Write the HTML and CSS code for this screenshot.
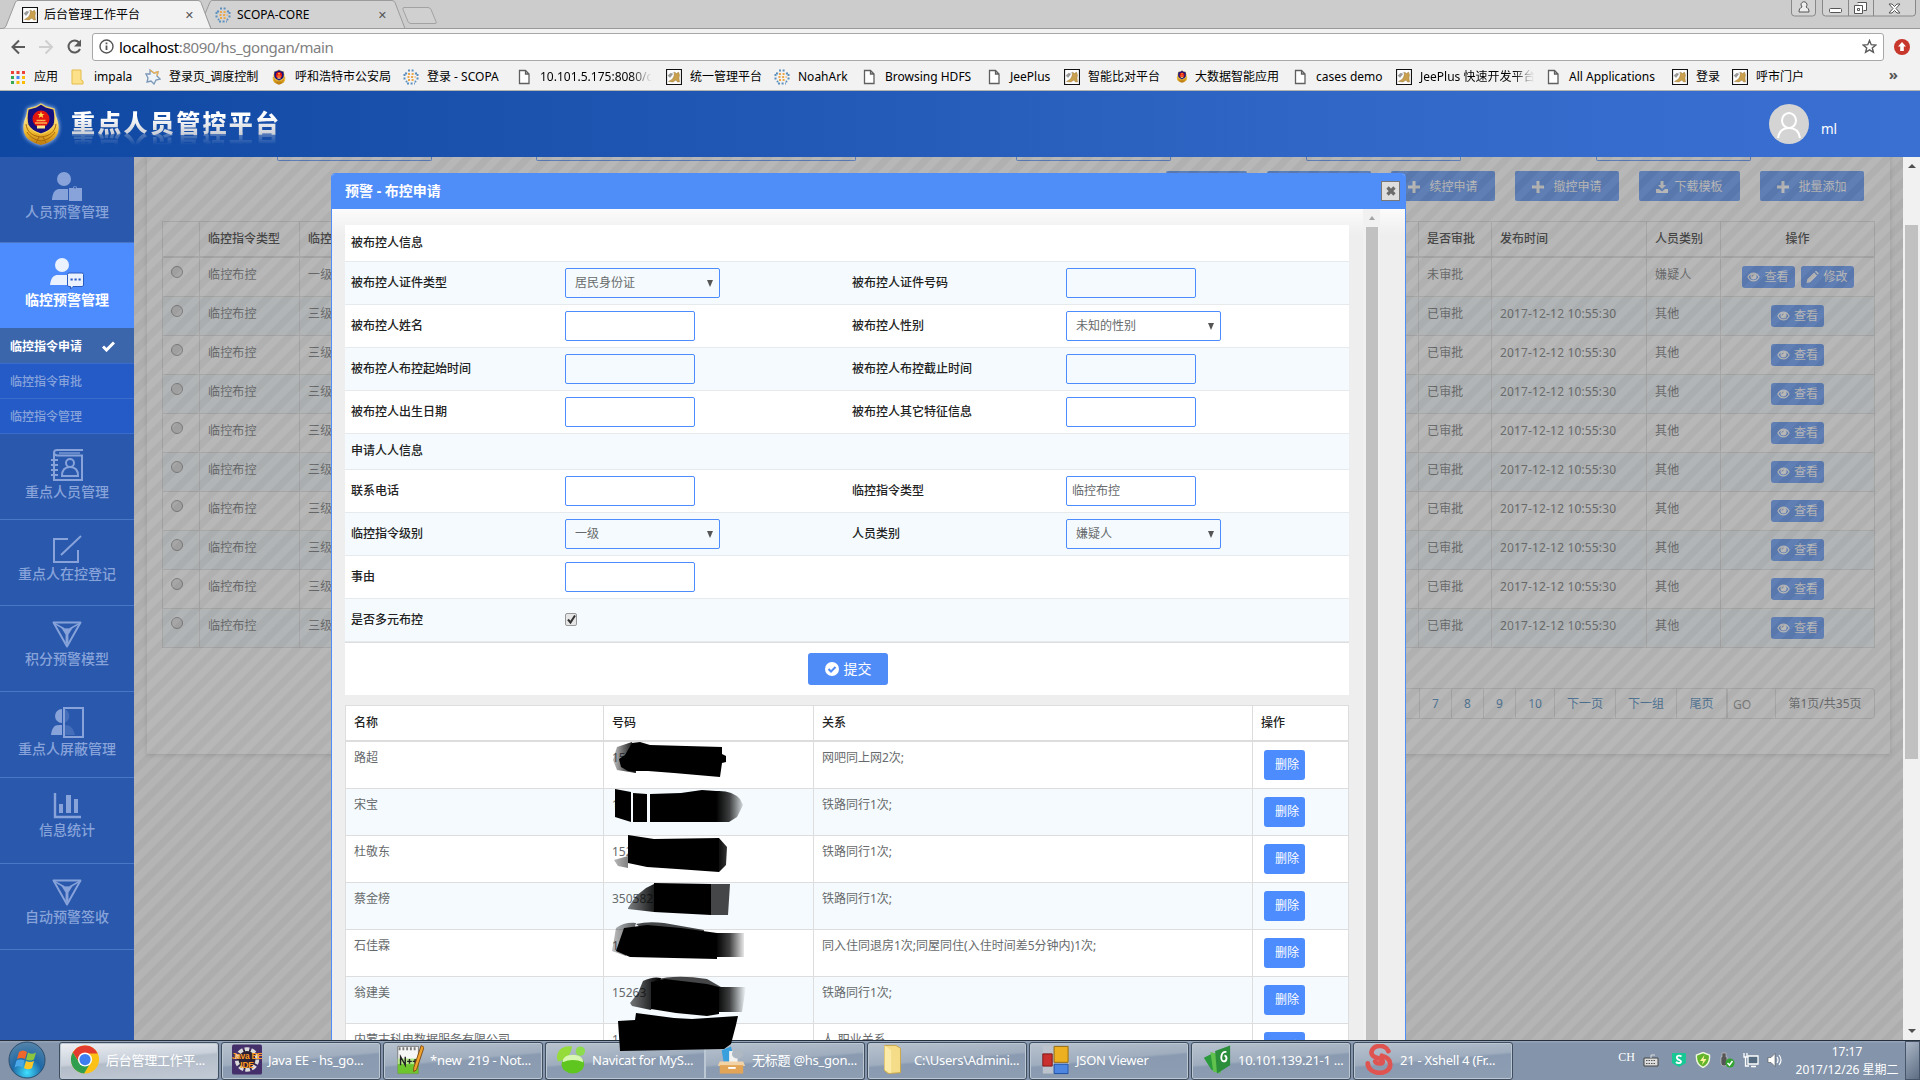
FILE: index.html
```html
<!DOCTYPE html>
<html lang="zh-CN">
<head>
<meta charset="utf-8">
<title>后台管理工作平台</title>
<link rel="stylesheet" href="styles.css">
</head>
<body>
<svg class="defs" width="0" height="0" aria-hidden="true">
  <defs>
    <linearGradient id="gold" x1="0" y1="0" x2="0" y2="1"><stop offset="0" stop-color="#fff3b0"/><stop offset=".6" stop-color="#efb82c"/><stop offset="1" stop-color="#b9780f"/></linearGradient>
    <radialGradient id="orb" cx=".5" cy=".85" r=".9"><stop offset="0" stop-color="#3fe0ff"/><stop offset=".45" stop-color="#1e6aa8"/><stop offset="1" stop-color="#5d87a8"/></radialGradient>
    <linearGradient id="fadeR"><stop offset="0" stop-color="#000"/><stop offset=".45" stop-color="#000" stop-opacity=".75"/><stop offset="1" stop-color="#000" stop-opacity="0"/></linearGradient>
    <linearGradient id="fadeL"><stop offset="0" stop-color="#000" stop-opacity=".25"/><stop offset="1" stop-color="#000"/></linearGradient>
  </defs>
  <symbol id="cat" viewBox="0 0 16 16"><path d="M.5.5h15v15H.5z" fill="#fff" stroke="#111" stroke-width="1.2"/><path d="M2.500 12.500l4-2.500 1.500-3L8.500 3l2 1.500L12.500 3l1 3-.5 3 .5 4h-2l-1.500-2-3 2z" fill="#c9a04e" stroke="#8d6a2f" stroke-width=".4"/><path d="M2 6.500L5 4l1.500 1.500-2.500 3zM6 4.500l2-1" fill="#999" stroke="#888" stroke-width=".5"/></symbol>
  <symbol id="scopa" viewBox="0 0 16 16"><g fill="none" stroke-width="2" stroke-dasharray="2 1.600"><path d="M5 1.500h7M4 14.500h8M1.500 5v7M14.500 5v7M3.500 3.500l-1 2M12.500 3.500l1 2M3 12l1 1M13 12l-1 1" stroke="#5b8fbe"/><path d="M5 5h7M4.500 8h8M5 11h7" stroke="#eda74b"/></g></symbol>
  <symbol id="page" viewBox="0 0 16 16"><path d="M3.500 1.500h6l3.500 3.500v9.500H3.500zM9.500 1.500V5H13" fill="#fff" stroke="#5f5f5f" stroke-width="1.300"/></symbol>
  <symbol id="badge" viewBox="0 0 40 44"><path d="M6 12C1 22 1 31 7 37c4 3 8 5 13 6 5-1 9-3 13-6 6-6 6-15 1-25L20 28z" fill="url(#gold)"/><path d="M20 2l5 3 8 2q2 10 0 16-3 6-13 9Q10 29 7 23 5 17 7 7l8-2z" fill="#15127d" stroke="#f6d35c" stroke-width="1.300"/><circle cx="20" cy="17" r="8.500" fill="#e2160f"/><path d="M20 9.500l1 2.500h2.500l-2 1.500.8 2.500-2.300-1.500-2.300 1.500.8-2.500-2-1.500H19z" fill="#ffd84e"/><path d="M14 21h12M15.500 18.500h9" stroke="#ffb04e" stroke-width="1.500"/><path d="M16 25h8" stroke="#ffe98a" stroke-width="3"/><path d="M5 22c1 8 6 12 15 13 9-1 14-5 15-13M6 30c3 5 8 8 14 9 6-1 11-4 14-9M15 41l3-6M25 41l-3-6" fill="none" stroke="#a9680c" stroke-width="1"/></symbol>
  <symbol id="plus" viewBox="0 0 12 12"><path d="M4.500 0h3v4.500H12v3H7.500V12h-3V7.500H0v-3h4.500z" fill="currentColor"/></symbol>
  <symbol id="eye" viewBox="0 0 14 12"><path d="M1 6c3-5.600 9-5.600 12 0-3 5.600-9 5.600-12 0z" fill="none" stroke="currentColor" stroke-width="1.300"/><circle cx="7" cy="5.500" r="3.300" fill="currentColor"/><path d="M5.400 5.600a1.700 1.700 0 0 1 1.700-1.700" fill="none" stroke="#5f7fbd" stroke-width=".9"/></symbol>
  <symbol id="pencil" viewBox="0 0 12 12"><path d="M0 12l.8-3.700L7.600 1.500l2.900 2.900-6.800 6.800zM8.400.700l.7-.7h.8L12 2.100v.8l-.7.7z" fill="currentColor"/></symbol>
  <symbol id="funnel" viewBox="0 0 32 28"><path d="M2 1.500h28L16 26.500z" fill="none" stroke="currentColor" stroke-width="2" stroke-linejoin="round"/><path d="M2 2l11 6M30 2l-11 6M16 8v18" fill="none" stroke="currentColor" stroke-width="1.600"/><path d="M10 7q6 1.500 12 0l-4.500 7v9h-3v-9z" fill="currentColor"/></symbol>
</svg>

<header class="chrome">
  <div class="tabstrip">
    <div class="tab tab-on">
      <svg class="tab-shape" viewBox="0 0 218 29"><path d="M0 28.500h2.500Q5 28.500 6 26L15.500 2Q16.500.5 18 .5h180q2 0 3 2L211 29H0z" fill="#f2f2f2" stroke="#9b9b9b"/></svg>
      <svg class="i16"><use href="#cat"/></svg><span>后台管理工作平台</span><b class="tab-x">✕</b>
    </div>
    <div class="tab tab-off">
      <svg class="tab-shape" viewBox="0 0 202 29"><path d="M1 14L6 2Q7 .5 8 .5h180q2 0 3 2l10 26H7z" fill="#d2d2d2" stroke="#9b9b9b"/></svg>
      <svg class="i16"><use href="#scopa"/></svg><span>SCOPA-CORE</span><b class="tab-x">✕</b>
    </div>
    <svg class="newtab" viewBox="0 0 36 18"><path d="M2 .5h24q2 0 3 2l5 12q1 2-1 2H9q-2 0-3-2L1 2.500Q.5.5 2 .5z" fill="#d0d0d0" stroke="#a2a2a2"/></svg>
    <div class="winbtns">
      <svg width="25" height="17"><path d="M.5 0v13q0 3 3 3h18q3 0 3-3V0" fill="#d3d3d3" stroke="#888"/><path d="M10 5a3 3 0 1 1 5 2c2 1 3 2 3 5H8c0-3 1-4 3-5z" fill="#eee" stroke="#555"/></svg>
      <svg width="94" height="17"><path d="M.5 0v13q0 3 3 3h87q3 0 3-3V0M26.500 0v16M51.500 0v16" fill="#d3d3d3" stroke="#888"/><rect x="7.500" y="8.500" width="12" height="4" rx="1" fill="#fff" stroke="#555"/><path d="M35.500 2.500h9v8h-3M32.500 5.500h8v8h-8z M35.500 8.500h2v2h-2z" fill="#fff" stroke="#555"/><path d="M67 4h3l2.500 2.500L75 4h3l-4 4.500 4 4.500h-3l-2.500-2.500L70 13h-3l4-4.500z" fill="#fff" stroke="#555"/></svg>
    </div>
  </div>
  <div class="toolbar">
    <svg class="navs" viewBox="0 0 76 18"><g fill="none" stroke-width="2"><path d="M14 9H2M8 2.500L1.500 9 8 15.500" stroke="#5a5a5a"/><path d="M28 9h12M34.500 2.500L41 9l-6.500 6.500" stroke="#cfcfcf"/><path d="M68 4.500A6 6 0 1 0 69 11" stroke="#5a5a5a"/></g><path d="M70 1.500v7h-7z" fill="#5a5a5a"/></svg>
    <div class="omnibox">
      <svg width="15" height="15" viewBox="0 0 15 15"><circle cx="7.500" cy="7.500" r="6.500" fill="none" stroke="#555" stroke-width="1.400"/><path d="M7.500 6.500V11M7.500 3.500v1.700" stroke="#555" stroke-width="1.800"/></svg>
      <span class="url"><i>localhost</i>:8090/hs_gongan/main</span>
      <svg class="star" width="15" height="15" viewBox="0 0 15 15"><path d="M7.500 1.500l1.700 4.200 4.600.3-3.500 2.900 1.100 4.400-3.900-2.400-3.900 2.400 1.100-4.400L1.200 6l4.600-.3z" fill="none" stroke="#5a5a5a" stroke-width="1.400"/></svg>
    </div>
    <svg class="upd" width="16" height="16" viewBox="0 0 16 16"><circle cx="8" cy="8" r="8" fill="#c8372b"/><path d="M8 3l4 4.500H9.800V12H6.200V7.500H4z" fill="#fff"/></svg>
  </div>
  <nav class="bookmarks">
    <a class="bm w1"><svg class="i16" viewBox="0 0 16 16"><path d="M1 2h3v3H1z" fill="#ea4335"/><path d="M6.500 2h3v3h-3z" fill="#ea4335"/><path d="M12 2h3v3h-3z" fill="#ea4335"/><path d="M1 7h3v3H1z" fill="#34a853"/><path d="M6.500 7h3v3h-3z" fill="#4285f4"/><path d="M12 7h3v3h-3zM6.500 12h3v3h-3zM12 12h3v3h-3z" fill="#fbbc05"/><path d="M1 12h3v3H1z" fill="#34a853"/></svg><span>应用</span></a>
    <a class="bm w2"><svg class="i16" viewBox="0 0 16 16"><path d="M2 1h9v10l2 1v3H2z" fill="#fce08a" stroke="#e5bd4b"/></svg><span>impala</span></a>
    <a class="bm w3"><svg class="i16" viewBox="0 0 16 16"><path d="M5 1l4 3 4-1-1 4 3 3-4 1-2 4-3-3-4 1 1-4-2-4 4 0z" fill="#eef3f8" stroke="#7b97b8" stroke-width="1.300"/><path d="M5 1l4 3 4-1-1 4" fill="none" stroke="#e8b259" stroke-width="1.300"/></svg><span>登录页_调度控制</span></a>
    <a class="bm w4"><svg class="i16"><use href="#badge"/></svg><span>呼和浩特市公安局</span></a>
    <a class="bm w5"><svg class="i16"><use href="#scopa"/></svg><span>登录 - SCOPA</span></a>
    <a class="bm w6 fade"><svg class="i16"><use href="#page"/></svg><span>10.101.5.175:8080/c</span></a>
    <a class="bm w7"><svg class="i16"><use href="#cat"/></svg><span>统一管理平台</span></a>
    <a class="bm w8"><svg class="i16"><use href="#scopa"/></svg><span>NoahArk</span></a>
    <a class="bm w9"><svg class="i16"><use href="#page"/></svg><span>Browsing HDFS</span></a>
    <a class="bm w10"><svg class="i16"><use href="#page"/></svg><span>JeePlus</span></a>
    <a class="bm w11"><svg class="i16"><use href="#cat"/></svg><span>智能比对平台</span></a>
    <a class="bm w12"><svg class="i16 sm"><use href="#badge"/></svg><span>大数据智能应用</span></a>
    <a class="bm w13"><svg class="i16"><use href="#page"/></svg><span>cases demo</span></a>
    <a class="bm w14 fade"><svg class="i16"><use href="#cat"/></svg><span>JeePlus 快速开发平台</span></a>
    <a class="bm w15"><svg class="i16"><use href="#page"/></svg><span>All Applications</span></a>
    <a class="bm w16"><svg class="i16"><use href="#cat"/></svg><span>登录</span></a>
    <a class="bm w17"><svg class="i16"><use href="#cat"/></svg><span>呼市门户</span></a>
    <b class="more">»</b>
  </nav>
</header>

<div class="apphead">
  <svg class="logo" width="40" height="44"><use href="#badge"/></svg>
  <h1>重点人员管控平台</h1>
  <svg class="avatar" width="40" height="40" viewBox="0 0 40 40"><circle cx="20" cy="20" r="20" fill="#d4d4d4"/><ellipse cx="20" cy="16.500" rx="7" ry="7.500" fill="none" stroke="#fff" stroke-width="2"/><path d="M9 34c1-7 5-10 11-10s10 3 11 10" fill="none" stroke="#fff" stroke-width="2"/></svg>
  <span class="user">ml</span>
</div>

<div class="app">
  <aside class="side">
    <a class="item"><svg width="32" height="29" viewBox="0 0 32 29"><circle cx="13" cy="7" r="7" fill="currentColor"/><path d="M1 27c1-8 4-10 8-10h8v11H1z" fill="currentColor"/><path d="M18 16h4a2 2 0 1 1 4 0h5v13H18z" fill="currentColor"/><circle cx="24" cy="15.500" r="1" fill="#2958ac"/></svg><span>人员预警管理</span></a>
    <a class="item on"><svg width="34" height="31" viewBox="0 0 34 31"><circle cx="12" cy="7" r="7" fill="currentColor"/><path d="M0 27c1-8 4-10 8-10h10v10z" fill="currentColor"/><path d="M19 15h13q1.500 0 1.500 1.500V27q0 1.500-1.500 1.500H23L20.500 31v-2.500H19q-1.500 0-1.500-1.500V16.500Q17.500 15 19 15z" fill="#eaf1ff" stroke="#2a5cc0"/><path d="M20.500 21.500h2.200m1.800 0h2.200m1.800 0h2.200" stroke="#2a5cc0" stroke-width="2"/></svg><span>临控预警管理</span></a>
    <a class="sub cur"><span>临控指令申请</span><svg width="13" height="11" viewBox="0 0 13 11"><path d="M1 5.500l3.500 3.500L12 1.500" fill="none" stroke="#fff" stroke-width="3"/></svg></a>
    <a class="sub"><span>临控指令审批</span></a>
    <a class="sub"><span>临控指令管理</span></a>
    <a class="item"><svg width="34" height="32" viewBox="0 0 34 32"><g fill="none" stroke="currentColor" stroke-width="2"><path d="M33 1H7Q4 1 4 3.500T7 6.500h25V31H4V4"/><path d="M9 4h21" stroke-width="1.300"/><circle cx="20" cy="14" r="4"/><path d="M12 27c0-6 3-9 8-9s8 3 8 9z"/><path d="M1 11h7M1 16h7M1 21h7M1 26h7"/></g></svg><span>重点人员管理</span></a>
    <a class="item"><svg width="30" height="28" viewBox="0 0 30 28"><path d="M16 4H2v23h24V15M9 20L29 1" fill="none" stroke="currentColor" stroke-width="2"/></svg><span>重点人在控登记</span></a>
    <a class="item"><svg width="32" height="27"><use href="#funnel"/></svg><span>积分预警模型</span></a>
    <a class="item"><svg width="34" height="31" viewBox="0 0 34 31"><path d="M12 2a7 7 0 0 0 0 14zM1 28c1-7 3-10 8-10h3v10z" fill="currentColor"/><path d="M14 2c7 2 7 12 0 14zM14 18c7 0 9 3 11 10H14z" fill="currentColor" opacity=".3"/><path d="M14 1h19v29H14z" fill="none" stroke="currentColor" stroke-width="2"/></svg><span>重点人屏蔽管理</span></a>
    <a class="item"><svg width="28" height="26" viewBox="0 0 28 26"><path d="M2 0v24h26" fill="none" stroke="currentColor" stroke-width="2.400"/><path d="M6 11h4v9H6zM13 2h5v18h-5zM21 6h4v14h-4z" fill="currentColor"/></svg><span>信息统计</span></a>
    <a class="item"><svg width="32" height="27"><use href="#funnel"/></svg><span>自动预警签收</span></a>
  </aside>

  <main class="content">
    <section class="panel">
      <div class="filters"><i class="f1"></i><i class="f2"></i><i class="f3"></i><i class="f4"></i><i class="f5"></i></div>
      <div class="actions">
        <a class="b81"></a><a class="b104"></a>
        <a class="b104"><svg class="i12"><use href="#plus"/></svg>续控申请</a>
        <a class="b104"><svg class="i12"><use href="#plus"/></svg>撤控申请</a>
        <a class="b101"><svg class="i12 dl" viewBox="0 0 12 12"><path d="M4.500 0h3v4H10L6 8 2 4h2.500zM0 8h3l3 2.500L9 8h3v4H0z" fill="currentColor"/></svg>下载模板</a>
        <a class="b104"><svg class="i12"><use href="#plus"/></svg>批量添加</a>
      </div>
      <table class="grid">
        <colgroup><col class="c1"><col class="c2"><col class="c3"><col class="c4"><col class="c5"><col class="c6"><col class="c7"></colgroup>
        <thead><tr><th></th><th>临控指令类型</th><th>临控指令级别</th><th>是否审批</th><th>发布时间</th><th>人员类别</th><th class="ctr">操作</th></tr></thead>
        <tbody>
        <tr><td><i class="radio"></i></td><td>临控布控</td><td>一级</td><td>未审批</td><td></td><td>嫌疑人</td><td><div class="ops"><a class="view"><svg><use href="#eye"/></svg>查看</a><a class="view"><svg><use href="#pencil"/></svg>修改</a></div></td></tr>
        <tr><td><i class="radio"></i></td><td>临控布控</td><td>三级</td><td>已审批</td><td>2017-12-12 10:55:30</td><td>其他</td><td><div class="ops"><a class="view"><svg><use href="#eye"/></svg>查看</a></div></td></tr>
        <tr><td><i class="radio"></i></td><td>临控布控</td><td>三级</td><td>已审批</td><td>2017-12-12 10:55:30</td><td>其他</td><td><div class="ops"><a class="view"><svg><use href="#eye"/></svg>查看</a></div></td></tr>
        <tr><td><i class="radio"></i></td><td>临控布控</td><td>三级</td><td>已审批</td><td>2017-12-12 10:55:30</td><td>其他</td><td><div class="ops"><a class="view"><svg><use href="#eye"/></svg>查看</a></div></td></tr>
        <tr><td><i class="radio"></i></td><td>临控布控</td><td>三级</td><td>已审批</td><td>2017-12-12 10:55:30</td><td>其他</td><td><div class="ops"><a class="view"><svg><use href="#eye"/></svg>查看</a></div></td></tr>
        <tr><td><i class="radio"></i></td><td>临控布控</td><td>三级</td><td>已审批</td><td>2017-12-12 10:55:30</td><td>其他</td><td><div class="ops"><a class="view"><svg><use href="#eye"/></svg>查看</a></div></td></tr>
        <tr><td><i class="radio"></i></td><td>临控布控</td><td>三级</td><td>已审批</td><td>2017-12-12 10:55:30</td><td>其他</td><td><div class="ops"><a class="view"><svg><use href="#eye"/></svg>查看</a></div></td></tr>
        <tr><td><i class="radio"></i></td><td>临控布控</td><td>三级</td><td>已审批</td><td>2017-12-12 10:55:30</td><td>其他</td><td><div class="ops"><a class="view"><svg><use href="#eye"/></svg>查看</a></div></td></tr>
        <tr><td><i class="radio"></i></td><td>临控布控</td><td>三级</td><td>已审批</td><td>2017-12-12 10:55:30</td><td>其他</td><td><div class="ops"><a class="view"><svg><use href="#eye"/></svg>查看</a></div></td></tr>
        <tr><td><i class="radio"></i></td><td>临控布控</td><td>三级</td><td>已审批</td><td>2017-12-12 10:55:30</td><td>其他</td><td><div class="ops"><a class="view"><svg><use href="#eye"/></svg>查看</a></div></td></tr>
        </tbody>
      </table>
      <div class="pager"><a class="p1"></a><a class="p1">7</a><a class="p1">8</a><a class="p1">9</a><a class="p2">10</a><a class="p3">下一页</a><a class="p3">下一组</a><a class="p4">尾页</a><span class="go">GO</span><span class="sum">第1页/共35页</span></div>
    </section>
    <div class="shade"></div>
  </main>
  <div class="vbar"><i class="up"></i><i class="thumb"></i><i class="down"></i></div>

  <div class="modal">
    <div class="mhead"><h2>预警 - 布控申请</h2><a class="close"><svg width="10" height="10" viewBox="0 0 10 10"><path d="M1.500 1.500l7 7M8.500 1.500l-7 7" stroke="#6b6b6b" stroke-width="3.200"/></svg></a></div>
    <div class="mbody">
      <div class="mmain">
        <div class="form">
          <div class="row cap"><b>被布控人信息</b></div>
          <div class="row alt"><b>被布控人证件类型</b><div><span class="sel">居民身份证</span></div><b>被布控人证件号码</b><div><span class="inp"></span></div></div>
          <div class="row"><b>被布控人姓名</b><div><span class="inp"></span></div><b>被布控人性别</b><div><span class="sel">未知的性别</span></div></div>
          <div class="row alt"><b>被布控人布控起始时间</b><div><span class="inp"></span></div><b>被布控人布控截止时间</b><div><span class="inp"></span></div></div>
          <div class="row"><b>被布控人出生日期</b><div><span class="inp"></span></div><b>被布控人其它特征信息</b><div><span class="inp"></span></div></div>
          <div class="row cap alt"><b>申请人人信息</b></div>
          <div class="row"><b>联系电话</b><div><span class="inp"></span></div><b>临控指令类型</b><div><span class="inp">临控布控</span></div></div>
          <div class="row alt"><b>临控指令级别</b><div><span class="sel">一级</span></div><b>人员类别</b><div><span class="sel">嫌疑人</span></div></div>
          <div class="row"><b>事由</b><div><span class="inp"></span></div></div>
          <div class="row alt"><b>是否多元布控</b><div><span class="chk"><svg width="11" height="11" viewBox="0 0 11 11"><path d="M2 5.500l2.500 3L9 1.500" fill="none" stroke="#333" stroke-width="2"/></svg></span></div></div>
          <div class="submit"><a><svg width="14" height="14" viewBox="0 0 14 14"><circle cx="7" cy="7" r="7" fill="#fff"/><path d="M3.500 7l2.500 2.500 4.500-4.500" fill="none" stroke="#4f8cf7" stroke-width="2"/></svg>提交</a></div>
        </div>
        <table class="rel">
          <colgroup><col class="r1"><col class="r2"><col class="r3"><col class="r4"></colgroup>
          <thead><tr><th>名称</th><th>号码</th><th>关系</th><th>操作</th></tr></thead>
          <tbody>
          <tr><td>路超</td><td>15</td><td>网吧同上网2次;</td><td><a class="del">删除</a></td></tr>
          <tr><td>宋宝</td><td>1</td><td>铁路同行1次;</td><td><a class="del">删除</a></td></tr>
          <tr><td>杜敬东</td><td>152</td><td>铁路同行1次;</td><td><a class="del">删除</a></td></tr>
          <tr><td>蔡金榜</td><td>350582</td><td>铁路同行1次;</td><td><a class="del">删除</a></td></tr>
          <tr><td>石佳霖</td><td>1</td><td>同入住同退房1次;同屋同住(入住时间差5分钟内)1次;</td><td><a class="del">删除</a></td></tr>
          <tr><td>翁建美</td><td>15263</td><td>铁路同行1次;</td><td><a class="del">删除</a></td></tr>
          <tr><td>内蒙古科电数据服务有限公司</td><td>1</td><td>人-职业关系</td><td><a class="del">删除</a></td></tr>
          </tbody>
        </table>
      </div>
      <div class="mbar"><i class="up"></i><i class="thumb"></i></div>
    </div>
  </div>
</div>

<footer class="taskbar">
  <svg class="start" width="38" height="38" viewBox="0 0 38 38"><circle cx="19" cy="19" r="18" fill="url(#orb)" stroke="#2b4d6e"/><path d="M11 11q4-3 8 0l-2 7q-4-2-8 0z" fill="#f0672b"/><path d="M20 11.500q4 2.500 8 0l-2 7q-4 2-8 0z" fill="#8cc63e"/><path d="M8.500 19.500q4-2 8 0l-2 7q-4-2.500-8 0z" fill="#4aa7e8"/><path d="M18 20q4 2 8 0l-2 7q-4 2.500-8 0z" fill="#fcc626"/></svg>
  <a class="task on"><svg viewBox="0 0 32 32"><circle cx="16" cy="16" r="15" fill="#fbc116"/><path d="M3 8.500a15 15 0 0 1 26.500 1H16l-6.500 9z" fill="#e33b2e"/><path d="M3 8.500a15 15 0 0 0 12 22.500l6.500-11-12-1z" fill="#2f9e4f"/><circle cx="16" cy="16" r="7.500" fill="#fff"/><circle cx="16" cy="16" r="6" fill="#3d7ff0"/></svg><span>后台管理工作平...</span></a>
  <a class="task"><svg viewBox="0 0 32 32"><rect width="32" height="32" rx="2" fill="#452f6b"/><circle cx="16" cy="16" r="11" fill="#2a2035" stroke="#dcdcdc" stroke-width="4" stroke-dasharray="5 2"/><text x="16" y="15" class="jee">Java EE</text><text x="16" y="25" class="jee">IDE</text></svg><span>Java EE - hs_go...</span></a>
  <a class="task"><svg viewBox="0 0 32 32"><path d="M4 2h22v29H4z" fill="#f6f6f6" stroke="#777"/><path d="M4 20h22v11H4z" fill="#6cc52c"/><path d="M4 15h22v6H4z" fill="#b4e88a"/><path d="M6 3v3m4-3v3m4-3v3m4-3v3m4-3v3" stroke="#777" stroke-width="2"/><path d="M7 22v-9l5 9v-9m2 5h5m1 0h5m-8.500-2.500v5m6-5v5" fill="none" stroke="#222" stroke-width="1.500"/><path d="M29 1l3 2-8 24-3 2v-4z" fill="#f0a32c" stroke="#804a12"/></svg><span>*new  219 - Not...</span></a>
  <div class="stack"><a class="task"><svg viewBox="0 0 32 32"><path d="M1 14C1 4 10 1 17 2c-1 9-6 14-15 16z" fill="#95dc3b"/><ellipse cx="18" cy="21" rx="12" ry="10" fill="#5fc51f"/><circle cx="26" cy="7" r="5" fill="#8cdc4d"/><path d="M7 19q0-8 11-8t11 8q-11-5-22 0z" fill="#d7f7b2"/></svg><span>Navicat for MyS...</span></a>
  <a class="task"><svg viewBox="0 0 32 32"><path d="M6 6l10-4 4 16H8z" fill="#3aa0dd"/><path d="M14 7h9v12h-9z" fill="#f2f2f2"/><ellipse cx="23" cy="10" rx="6" ry="5" fill="#aeb8c2"/><path d="M4 18h25l2 5H2z" fill="#f1d3a7"/><path d="M4 22h25v9H4z" fill="#e2a557"/><path d="M13 25h8" stroke="#fff" stroke-width="2"/></svg><span>无标题 @hs_gon...</span></a></div>
  <a class="task"><svg viewBox="0 0 32 32"><path d="M7 1h12l5 3v26l-13 1-4-3z" fill="#f4dc88" stroke="#caa545"/><path d="M7 1l7 5v25l-7-4z" fill="#fceaa9"/></svg><span>C:\Users\Admini...</span></a>
  <a class="task"><svg viewBox="0 0 32 32"><path d="M3 1h28v30H3z" fill="#bcc3cc"/><path d="M15 2h15v17H15z" fill="#ecb020" stroke="#8c6410"/><path d="M3 10h10v13H3z" fill="#c9302e" stroke="#7d1513"/><path d="M15 21h15v10H15z" fill="#4d86e0" stroke="#1d4c9f"/></svg><span>JSON Viewer</span></a>
  <a class="task"><svg viewBox="0 0 32 32"><path d="M2 14l10-5 4 20-6-2z" fill="#2a9a3c"/><path d="M9 8l11 3v20L12 29z" fill="#60c14d"/><path d="M14 7l16-6v21l-14 9z" fill="#2b8e3b"/><path d="M26 8c-6-1-7 9-3 10 4 0 4-6 1-6" fill="none" stroke="#fff" stroke-width="2"/></svg><span>10.101.139.21-1 ...</span></a>
  <a class="task"><svg viewBox="0 0 32 32"><path d="M26 7C23-1 8 0 8 9c0 6 12 5 12 9 0 3-7 3-8 0M4 20c0 13 24 14 24 1 0-6-5-8-9-9" fill="none" stroke="#df5450" stroke-width="5" stroke-linecap="round"/></svg><span>21 - Xshell 4 (Fr...</span></a>
  <div class="tray">
    <span class="ch">CH</span>
    <svg class="kb" viewBox="0 0 16 16"><path d="M1 6h14v8H1z" fill="#ddd" stroke="#444"/><path d="M3 8.500h10M3 11.500h10" stroke="#555" stroke-dasharray="1.500 1"/><path d="M8 6V3h4" fill="none" stroke="#ddd"/></svg>
    <svg viewBox="0 0 16 16"><path d="M1 1h14v10l-7 4-7-4z" fill="#19c795"/><path d="M10.500 4.500c-3-2-6 0-4 2.500 1 1 4 1 3.500 3-1 2-4 1-5 0" fill="none" stroke="#fff" stroke-width="1.800"/></svg>
    <svg viewBox="0 0 16 16"><path d="M8 .5l6.500 2.500q1 9-6.500 12.500Q.5 12 1.500 3z" fill="#62b52b" stroke="#eef7dd" stroke-width="1.400"/><path d="M9.500 3L5 9h3l-1 4 4.500-6h-3z" fill="#fff29a"/></svg>
    <svg viewBox="0 0 16 16"><path d="M3 1h4v4h1v6q0 3-3 3t-3-3V5h1z" fill="#555" stroke="#ccc" stroke-width=".6"/><circle cx="11" cy="11" r="4.500" fill="#31a431"/><path d="M8.500 11l2 2 3-4" fill="none" stroke="#fff" stroke-width="1.500"/></svg>
    <svg viewBox="0 0 16 16"><path d="M5 4h10v8H5z" fill="#556b80" stroke="#fff" stroke-width="1.300"/><path d="M8 14.500h5M1 1v4h3V1M2.500 5v9H6" fill="none" stroke="#fff" stroke-width="1.300"/></svg>
    <svg viewBox="0 0 16 16"><path d="M1 5.500h3l4-4v13l-4-4H1z" fill="#fff" stroke="#555" stroke-width=".6"/><path d="M10 5q2 3 0 6M12 3q4 5 0 10" fill="none" stroke="#fff" stroke-width="1.200"/></svg>
  </div>
  <div class="clock"><span>17:17</span><span>2017/12/26 星期二</span></div>
  <i class="peek"></i>
</footer>

<svg class="marks" viewBox="605 735 150 320" width="150" height="320">
  <g fill="#000">
    <path d="M632 743l8-1 10 3 72 2v7l4 2v6l-4 1-2 14-46-4-26-2-20 0-7-4-2-8 6-4z"/>
    <path d="M615 789l16 3v30l-16-5zM633 793l14 1v28h-14zM650 794l31-1 21-3 14 1v31h-66z"/>
    <path d="M628 835l26 4 65-1v7 27l-42-3-30-2-19-4z"/>
    <path d="M654 883l57 1v31l-57-3z"/>
    <path d="M624 928l23-3 34 3 36 5v26l-87-2-14-6z"/>
    <path d="M651 982l14-3 42 5 12 3v27l-12 2-31-3-25-4z"/>
    <path d="M618 1021l17-1 1-7 38 5 18 1 46-3-2 9-5 19-7 5-104 2z"/>
  </g>
  <path fill="url(#fadeL)" d="M617 747l15-5 4 31-19-3-4-10z"/>
  <path fill="url(#fadeR)" d="M716 791q16-1 24 8l3 6-6 12-8 5h-13zM719 838l8 9-1 18-7 7zM717 933h27v24h-27zM719 987h27l-4 25h-23z"/>
  <path fill="url(#fadeL)" d="M614 860l14-4v12l-10-2zM628 908l8-12 10-8 8-4v28l-26-3zM612 951l4-23q8-6 20-5l-10 33zM630 1003l8-10 5-12q10-5 18-3l-10 32-19-4z"/>
  <path fill="#000" opacity=".72" d="M711 884h19l-2 31h-17zM636 924q12-3 28-1l40 7v5l-60-5zM655 980q20-6 52-1l14 8-14 1z"/>
</svg>
</body>
</html>
```
FILE: styles.css
```css
* { box-sizing: border-box; }
html, body { height: 100%; }
body { margin: 0; width: 1920px; height: 1080px; overflow: hidden; display: flex; flex-direction: column; position: relative; font: 12px/20px "Noto Sans", "Noto Sans CJK SC", sans-serif; color: #676a6c; }
i { font-style: normal; }
svg { display: block; flex: none; }
.defs { position: absolute; }
.i16 { width: 16px; height: 16px; }

/* browser window */
.chrome { flex: none; height: 91px; background: #f2f2f2; border-bottom: 1px solid #b6b4b0; color: #000; }
.tabstrip { display: flex; height: 29px; background: #ccc; border-bottom: 1px solid #999; }
.tab { position: relative; display: flex; align-items: center; height: 29px; font-size: 12px; }
.tab > * { position: relative; }
.tab .tab-shape { position: absolute; left: 0; top: 0; width: 100%; height: 29px; }
.tab-on { width: 212px; padding: 1px 18px 0 22px; z-index: 2; }
.tab-on .tab-shape { width: 218px; }
.tab-on span { margin-left: 6px; }
.tab-off { width: 202px; margin-left: -8px; padding: 1px 19px 0 11px; }
.tab-off span { margin-left: 6px; }
.tab-x { margin-left: auto; font: 700 11px "DejaVu Sans", sans-serif; color: #555; }
.newtab { width: 36px; height: 18px; margin: 7px 0 0 -4px; }
.winbtns { display: flex; gap: 6px; margin: 0 4px 0 auto; }
.toolbar { display: flex; align-items: center; height: 35px; padding: 0 10px 0 11px; }
.navs { width: 76px; height: 18px; margin-right: 5px; }
.omnibox { flex: 1; display: flex; align-items: center; height: 28px; margin-top: 1px; background: #fff; border: 1px solid #a8a8a8; border-radius: 3px; padding: 0 6px 1px; }
.url { margin-left: 5px; font-size: 15px; letter-spacing: -.4px; color: #808080; }
.url i { color: #000; }
.star { margin-left: auto; }
.upd { margin-left: 10px; }
.bookmarks { display: flex; align-items: center; height: 25px; padding: 0 22px 0 10px; }
.bm { flex: none; display: flex; align-items: center; overflow: hidden; white-space: nowrap; }
.bm span { margin-left: 8px; }
.bm .sm { height: 13px; }
.fade { -webkit-mask-image: linear-gradient(90deg, #000 84%, transparent 99%); mask-image: linear-gradient(90deg, #000 84%, transparent 99%); }
.w1 { width: 60px; } .w2 { width: 75px; } .w3 { width: 126px; } .w4 { width: 132px; } .w5 { width: 113px; }
.w6 { width: 137px; margin-right: 13px; } .w7 { width: 108px; } .w8 { width: 87px; } .w9 { width: 125px; } .w10 { width: 78px; }
.w11 { width: 110px; } .w12 { width: 118px; } .w12 span { margin-left: 5px; } .w13 { width: 104px; }
.w14 { width: 140px; margin-right: 9px; } .w15 { width: 127px; } .w16 { width: 60px; } .w17 { width: 90px; }
.more { margin: -5px 0 0 auto; font-size: 15px; color: #555; }

/* application banner */
.apphead { flex: none; height: 66px; display: flex; align-items: center; padding-left: 21px; background: linear-gradient(90deg, #0f48a2, #2158b5 40%, #3168c7 70%, #3b70d3); }
.logo { filter: drop-shadow(0 0 2px #cfe0ff); }
.apphead h1 { margin: -5px 0 0 10px; font: 900 24px/26px "Noto Sans CJK SC", sans-serif; letter-spacing: 2.300px; background: linear-gradient(#fff 30%, #c8ccd4); -webkit-background-clip: text; background-clip: text; color: transparent; -webkit-box-reflect: below -3px linear-gradient(transparent 50%, rgba(255,255,255,.4)); }
.avatar { margin: 0 12px 0 auto; }
.user { width: 99px; color: #fff; font-size: 13.500px; padding-top: 10px; }

.app { flex: 1; min-height: 0; display: flex; position: relative; overflow: hidden; }

/* sidebar */
.side { flex: none; width: 134px; background: #2958ac; color: #87a3da; overflow: hidden; }
.item { display: flex; flex-direction: column; align-items: center; height: 86px; padding-top: 15px; border-bottom: 1px solid #4a76c6; font-size: 14px; line-height: 22px; font-weight: 500; }
.item.on { background: #4d8cff; color: #eaf1ff; height: 85px; border: 0; }
.item.on span { color: #fff; font-weight: 700; }
.sub { display: flex; align-items: center; height: 35px; padding: 1px 19px 0 10px; background: #245bc7; border-bottom: 1px solid #396ccb; justify-content: space-between; font-weight: 500; }
.sub.cur { background: #3c66ac; color: #fff; font-weight: 700; height: 36px; padding-top: 2px; }

/* page behind the dialog */
.content { flex: none; width: 1769px; position: relative; overflow: hidden; background: #f9f9f9; }
.panel { margin: 0 13px; height: 597px; background: #fff; box-shadow: 0 1px 5px rgba(0,0,0,.2); padding: 0 15px; }
.filters { display: flex; height: 4px; padding-left: 115px; }
.filters i { flex: none; border: 1px solid #4d8cff; border-top: 0; border-radius: 0 0 2px 2px; }
.f1 { width: 155px; } .f2 { width: 320px; margin-left: 104px; } .f3 { width: 155px; margin-left: 160px; } .f4 { width: 155px; margin-left: 135px; } .f5 { width: 155px; margin-left: 135px; }
.actions { display: flex; justify-content: flex-end; gap: 20px; padding: 10px 11px 0 0; }
.actions a { display: flex; align-items: center; justify-content: center; gap: 9px; height: 30px; padding-top: 1px; background: #4f8df8; color: #fff; border-radius: 2px; }
.i12 { width: 12px; height: 12px; }
.actions .b101 { gap: 6px; }
.b81 { width: 81px; } .b104 { width: 104px; } .b101 { width: 101px; }
.grid { table-layout: fixed; width: 1713px; margin-top: 20px; border-collapse: collapse; }
.grid th, .grid td { border: 1px solid #ddd; padding: 0 8px; text-align: left; }
.grid th { height: 35px; color: #222; font-weight: 500; border-bottom-width: 2px; }
.grid td { height: 39px; vertical-align: top; padding-top: 7px; letter-spacing: .15px; }
.grid tbody tr:first-child td { height: 40px; }
.grid tbody tr:nth-child(even) { background: #f3fafd; }
.grid .ctr { text-align: center; }
.c1 { width: 37px; } .c2 { width: 100px; } .c3 { width: 1119px; } .c4 { width: 73px; } .c5 { width: 155px; } .c6 { width: 74px; }
.radio { display: block; width: 12px; height: 12px; margin-top: 1px; border: 1px solid #8b8b8b; border-radius: 50%; background: #ddd; }
.ops { display: flex; justify-content: center; gap: 6px; padding-top: 1px; }
.view { display: flex; align-items: center; justify-content: center; gap: 4px; width: 53px; height: 22px; background: #4f8df8; color: #fff; border-radius: 3px; letter-spacing: 0; }
.view svg { width: 13px; height: 12px; }
.pager { display: flex; justify-content: flex-end; margin-top: 40px; }
.pager > * { height: 31px; border: 1px solid #ddd; border-left: 0; text-align: center; line-height: 29px; color: #337ab7; }
.p1 { width: 32px; } .p2 { width: 39px; } .p3 { width: 61px; } .p4 { width: 50px; }
.pager .go { width: 49px; text-align: left; padding-left: 5px; border-left: 1px solid #ddd; color: #888; line-height: 31px; }
.pager .sum { width: 99px; color: #676a6c; border-radius: 0 4px 4px 0; }
.shade { position: absolute; inset: 0; background: repeating-linear-gradient(135deg, rgba(112,112,112,.5) 0 7.071px, rgba(98,98,98,.5) 7.071px 14.142px); }
.vbar { width: 17px; display: flex; flex-direction: column; align-items: center; background: #f1f1f1; }
.vbar .thumb { width: 13px; height: 534px; margin-top: 59px; background: #c1c1c1; }
.up, .down { flex: none; width: 0; height: 0; border: 4px solid transparent; }
.up { border-bottom-color: #505050; border-top: 0; }
.down { border-top-color: #505050; border-bottom: 0; margin-top: auto; margin-bottom: 7px; }
.vbar .up { margin-top: 7px; margin-bottom: -2px; }

/* dialog */
.modal { position: absolute; left: 331px; top: 16px; width: 1075px; height: 900px; border: 1px solid #4f8df8; border-radius: 4px 4px 0 0; background: linear-gradient(#fbfbfb 36px, #eee 62px); display: flex; flex-direction: column; overflow: hidden; }
.mhead { flex: none; height: 35px; background: #4f8df8; display: flex; align-items: center; justify-content: space-between; padding: 0 5px 2px 13px; }
.mhead h2 { margin: 0; font: 700 14px/20px "Noto Sans", "Noto Sans CJK SC", sans-serif; color: #fff; }
.close { width: 19px; height: 20px; background: #dedede; border: 1px solid #777; display: flex; align-items: center; justify-content: center; }
.mbody { flex: 1; display: flex; }
.mmain { flex: none; width: 1031px; padding: 16px 14px 0 13px; }
.mbar { width: 17px; display: flex; flex-direction: column; align-items: center; background: #f1f1f1; }
.mbar .thumb { width: 12px; flex: 1; background: #c1c1c1; margin-top: 7px; }
.mbar .up { border-bottom-color: #a3a3a3; margin-top: 7px; border-left-width: 3.500px; border-right-width: 3.500px; }
.form { width: 1004px; background: #fff; }
.row { display: grid; grid-template-columns: 214px 287px 214px 1fr; align-items: center; height: 43px; padding-left: 6px; border-bottom: 1px solid #e7eaec; }
.row.cap { height: 36px; }
.row.cap:first-child { height: 37px; }
.row.cap.alt { padding-bottom: 1px; }
.alt { background: #f4fafd; }
.row b { color: #222; font-weight: 500; }
.inp, .sel { display: flex; align-items: center; width: 130px; height: 30px; border: 1px solid #4d8cff; border-radius: 2px; padding: 0 5px; }
.sel { width: 155px; padding: 0 6px 0 9px; justify-content: space-between; }
.sel::after { content: ""; border: 3px solid transparent; border-top: 7px solid #555; border-bottom: 0; }
.chk { display: flex; width: 12px; height: 13px; margin-top: -1px; border: 1px solid #999; border-radius: 2px; background: #e6e6e6; }
.submit { height: 53px; border-top: 1px solid #ddd; padding: 10px 0 0 2px; display: flex; justify-content: center; }
.submit a { display: flex; align-items: center; justify-content: center; gap: 5px; width: 80px; height: 32px; border-radius: 3px; background: #4f8cf7; color: #fff; font-size: 14px; }
.rel { table-layout: fixed; width: 1004px; margin-top: 10px; border-collapse: collapse; background: #fff; }
.rel th, .rel td { border: 1px solid #ddd; padding: 0 8px; text-align: left; }
.rel th { height: 35px; color: #222; font-weight: 500; border-bottom-width: 2px; }
.rel td { height: 47px; vertical-align: top; padding-top: 6px; white-space: nowrap; }
.rel tbody tr:first-child td { height: 48px; }
.rel td:last-child { padding: 8px 0 0 11px; }
.rel tbody tr:nth-child(even) { background: #f4fafd; }
.r1 { width: 258px; } .r2 { width: 210px; } .r3 { width: 439px; }
.del { display: block; width: 41px; height: 30px; padding-left: 11px; border-radius: 3px; background: #4d8cff; color: #fff; line-height: 30px; }

/* taskbar */
.taskbar { flex: none; height: 40px; display: flex; background: linear-gradient(#26303c 0 1px, #93a3b8 1px 2px, #8394ab 3px); padding-left: 8px; color: #fff; }
.start { margin: 1px 13px 0 0; }
.task { flex: none; display: flex; align-items: center; width: 160px; height: 38px; margin: 2px 2px 0 0; padding: 0 0 3px 10px; border: 1px solid #3f4d5e; border-radius: 3px; box-shadow: inset 0 0 0 1px #bcc7d4; background: linear-gradient(175deg, #b9c3cf 0, #9fadbe 45%, #8a9bb1 50%, #8d9eb3); font-size: 13px; white-space: pre; letter-spacing: -.25px; }
.task.on { background: linear-gradient(175deg, #eef1f5 0, #c9d0da 45%, #b3bdc9 50%, #c2cad5); }
.task svg { width: 30px; height: 31px; margin-right: 6px; }
.jee { font: 700 9px "Liberation Sans", sans-serif; fill: #ff9a1f; text-anchor: middle; }
.stack { display: flex; margin-right: 2px; }
.stack .task { margin-right: 0; width: 160px; }
.stack .task:first-child { border-radius: 3px 0 0 3px; border-right: 0; }
.stack .task:last-child { border-radius: 0 3px 3px 0; border-left: 0; padding-left: 11px; }
.tray { margin-left: auto; display: flex; align-items: center; gap: 8px; }
.tray svg { width: 16px; height: 16px; }
.tray .kb { margin-right: 4px; }
.ch { font: 12px "Liberation Serif", serif; margin-top: -5px; }
.clock { width: 116px; margin: 3px 0 0 6px; display: flex; flex-direction: column; align-items: center; font-size: 12px; line-height: 18px; white-space: nowrap; }
.peek { width: 15px; margin-top: 1px; border: 1px solid #47556a; background: linear-gradient(135deg, #aab6c6, #5d6d83); }

/* blacked-out id numbers */
.marks { position: absolute; left: 605px; top: 735px; }
```
